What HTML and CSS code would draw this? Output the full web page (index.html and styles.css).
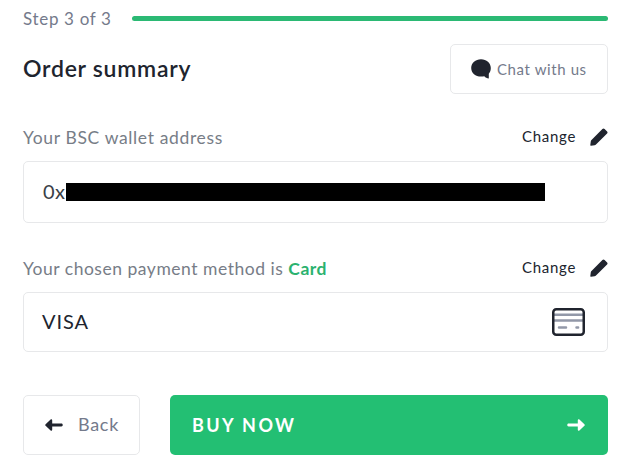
FILE: index.html
```html
<!DOCTYPE html>
<html lang="en">
<head>
<meta charset="utf-8">
<title>Order summary</title>
<link rel="stylesheet" href="styles.css">
</head>
<body>
<main class="checkout">
  <div class="progress">
    <span class="step">Step 3 of 3</span>
    <div class="bar"></div>
  </div>
  <header class="heading">
    <h1>Order summary</h1>
    <button class="btn chat">
      <svg width="20" height="21" viewBox="0 0 20 21"><path d="M10 .2C4.500.2.2 4 .2 9s4.300 8.600 9.800 8.600c1.200 0 2.300-.1 3.300-.4 1.200 1.400 2.700 2 4.500 2.300v-4.700c1.300-1.500 2-3.500 2-5.800 0-5-4.300-8.800-9.800-8.800Z"/></svg>
      <span>Chat with us</span>
    </button>
  </header>
  <section class="wallet">
    <div class="row">
      <span class="label wallet-label">Your BSC wallet address</span>
      <a class="change"><span>Change</span><svg width="18" height="18" viewBox="0 0 18 18"><path d="M12.400.9c.7-.7 1.500-.7 2.200 0l2.500 2.500c.6.6.6 1.400 0 2L6 16.500c-.4.400-.9.600-1.400.7L1 17.700c-.5.100-.8-.2-.7-.7l.5-3.800c.1-.5.300-.9.700-1.300Z"/></svg></a>
    </div>
    <div class="field address"><span>0x</span><div class="redacted"></div></div>
  </section>
  <section class="payment">
    <div class="row">
      <span class="label method-label">Your chosen payment method is <b>Card</b></span>
      <a class="change"><span>Change</span><svg width="18" height="18" viewBox="0 0 18 18"><path d="M12.400.9c.7-.7 1.500-.7 2.200 0l2.500 2.500c.6.6.6 1.400 0 2L6 16.500c-.4.400-.9.600-1.400.7L1 17.700c-.5.100-.8-.2-.7-.7l.5-3.800c.1-.5.300-.9.700-1.300Z"/></svg></a>
    </div>
    <div class="field method"><span>VISA</span>
      <svg width="33" height="28" viewBox="0 0 33 28"><path d="M2 6.800h29M2 12.500h29" stroke="#9298a8" stroke-width="2.600"/><path d="M7 19.500h7M24.500 19.500h1.600" stroke="#9298a8" stroke-width="2.500" stroke-linecap="round"/><rect x="1.250" y="1.250" width="30.500" height="25.500" rx="3" fill="none" stroke="#20242e" stroke-width="2.500"/></svg>
    </div>
  </section>
  <footer class="actions">
    <button class="btn back">
      <svg width="18" height="12" viewBox="0 0 18 12"><path d="M.6 5.200 5.600.5c.8-.7 1.600-.3 1.600.7v3.400h9.200c1.800 0 1.800 2.800 0 2.800H7.200v3.400c0 1-.8 1.400-1.600.7L.6 6.800q-.8-.8 0-1.600Z"/></svg>
      <span>Back</span>
    </button>
    <button class="btn buy">
      <span>BUY NOW</span>
      <svg width="18" height="12" viewBox="0 0 18 12"><path d="m17.400 5.200-5-4.700c-.8-.7-1.600-.3-1.600.7v3.400H1.600c-1.800 0-1.800 2.800 0 2.800h9.200v3.400c0 1 .8 1.400 1.600.7l5-4.700q.8-.8 0-1.600Z"/></svg>
    </button>
  </footer>
</main>
</body>
</html>
```
FILE: styles.css
```css
* { box-sizing: border-box; }
body {
  margin: 0;
  background: #fff;
  color: #20242e;
  font-family: Lato, "Open Sans", sans-serif;
}
svg { display: block; flex: none; fill: #20242e; }
span { white-space: nowrap; }
.checkout { width: 624px; padding: 7px 16px 0 23px; }
.progress { display: flex; align-items: center; height: 23px; }
.step { width: 109px; font-size: 17px; letter-spacing: .67px; color: #747a8b; }
.bar { flex: 1; height: 5px; border-radius: 3px; background: #2bb974; }
.heading { display: flex; justify-content: space-between; align-items: center; height: 50px; margin-top: 14px; }
h1 { margin: 0; padding-bottom: 2px; font-size: 23px; font-weight: 600; letter-spacing: .75px; line-height: 30px; }
.btn {
  display: flex;
  align-items: center;
  border: 1px solid #e7e8ea;
  border-radius: 5px;
  background: #fff;
  font-family: inherit;
  color: #747a8b;
}
.chat { width: 158px; height: 50px; padding: 0 0 0 20px; gap: 6px; font-size: 15px; letter-spacing: .6px; }
.wallet { margin-top: 30px; }
.payment { margin-top: 32px; }
.row { display: flex; justify-content: space-between; align-items: center; height: 26px; }
.label { font-size: 17.5px; color: #777d87; }
.wallet-label { letter-spacing: .65px; }
.method-label { letter-spacing: .52px; }
.label b { color: #2bb26f; font-weight: 700; }
.change { display: flex; align-items: center; gap: 14px; font-size: 15px; letter-spacing: .7px; }
.change span { padding-bottom: 2px; }
.field {
  display: flex;
  align-items: center;
  margin-top: 11px;
  border: 1px solid #e7e8ea;
  border-radius: 5px;
}
.address { height: 62px; padding-left: 19px; font-size: 20px; color: #3b3f47; }
.address span { width: 23px; padding-bottom: 2px; letter-spacing: .3px; }
.redacted { width: 479px; height: 18px; background: #000; }
.method { height: 60px; padding: 0 22px 0 18px; justify-content: space-between; font-size: 20px; }
.method span { padding-bottom: 2px; letter-spacing: .9px; }
.actions { display: flex; gap: 30px; margin-top: 43px; }
.actions .btn { height: 60px; }
.back { width: 117px; padding: 0 0 0 21px; gap: 15px; font-size: 18px; letter-spacing: .7px; }
.back span { padding-bottom: 2px; }
.buy {
  flex: 1;
  justify-content: space-between;
  padding: 0 23px 0 22px;
  border: 0;
  background: #23bf73;
  color: #fff;
  font-size: 18px;
  font-weight: 700;
  letter-spacing: 2.4px;
}
.buy svg { fill: #fff; }
```
